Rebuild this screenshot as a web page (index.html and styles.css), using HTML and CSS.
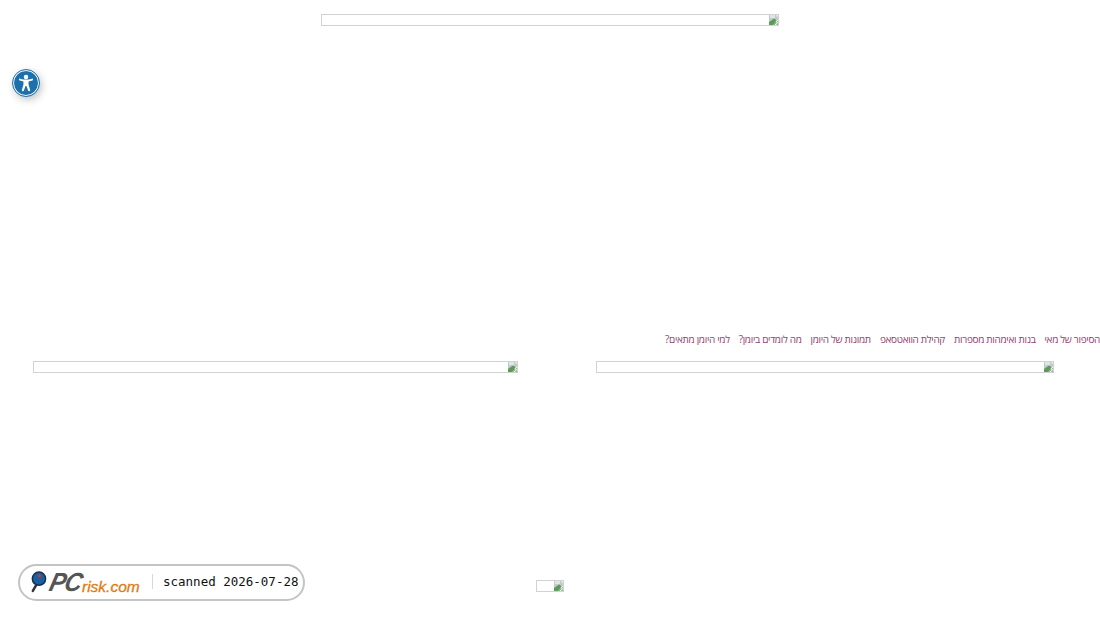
FILE: index.html
```html
<!DOCTYPE html>
<html lang="he" dir="rtl">
<head>
<meta charset="utf-8">
<title>הסיפור של מאי</title>
<link rel="stylesheet" href="styles.css">
</head>
<body>
<svg class="defs" width="0" height="0" aria-hidden="true">
  <symbol id="broken" viewBox="0 0 10 11">
    <path d="M0 0H7.5L10 2.5V11H0Z" fill="#c3cbc9"/>
    <path d="M1 1H6V4H1Z" fill="#dfe6ea"/>
    <path d="M0 11V8L5 4.5L8 6.5L4 11Z" fill="#5d9a58"/>
    <path d="M4 11L8 6.5L10 8V11Z" fill="#8cb58a"/>
    <path d="M7.5 0L10 2.5H7.5Z" fill="#f2f4f2"/>
    <path d="M10 5.5L7 7.5L8.5 9L6 11" fill="none" stroke="#fff" stroke-width="1"/>
  </symbol>
</svg>

<header class="top">
  <div class="ph ph-top"><svg class="ph-icon"><use href="#broken"/></svg></div>
</header>

<nav class="menu">
  <a href="#">הסיפור של מאי</a>
  <a href="#">בנות ואימהות מספרות</a>
  <a href="#">קהילת הוואטסאפ</a>
  <a href="#">תמונות של היומן</a>
  <a href="#">מה לומדים ביומן?</a>
  <a href="#">למי היומן מתאים?</a>
</nav>

<section class="cols">
  <div class="ph ph-right"><svg class="ph-icon"><use href="#broken"/></svg></div>
  <div class="ph ph-left"><svg class="ph-icon"><use href="#broken"/></svg></div>
</section>

<footer class="bottom">
  <div class="ph ph-small"><svg class="ph-icon"><use href="#broken"/></svg></div>
</footer>

<button class="a11y" type="button" aria-label="נגישות">
  <svg viewBox="0 0 24 24" width="18" height="18">
    <circle cx="12" cy="4" r="3" fill="#fff"/>
    <path d="M2.6 7.2C2.6 6.4 3.3 6 4 6.2C9.3 7.7 14.7 7.7 20 6.2C20.7 6 21.4 6.4 21.4 7.2C21.4 7.9 21 8.3 20.4 8.5L15.4 10V14L17.4 21C17.7 22 17.2 22.8 16.3 23C15.6 23.1 15.1 22.7 14.8 22L12.6 16H11.4L9.2 22C8.9 22.7 8.4 23.1 7.7 23C6.8 22.8 6.3 22 6.6 21L8.6 14V10L3.6 8.5C3 8.3 2.6 7.9 2.6 7.2Z" fill="#fff"/>
  </svg>
</button>

<aside class="stamp" dir="ltr">
  <span class="logo">
    <svg class="lens" viewBox="0 0 18 24" width="17" height="23">
      <path d="M7 15L3 22" stroke="#333" stroke-width="2.6" stroke-linecap="round"/>
      <circle cx="9.5" cy="9" r="7" fill="#1c5f9e" stroke="#15304f" stroke-width="1.6"/>
      <circle cx="10" cy="6" r="1.8" fill="#b3403f"/>
    </svg>
    <span class="logo-pc">PC</span><span class="logo-risk">risk.com</span>
  </span>
  <span class="stamp-sep"></span>
  <span class="stamp-text">scanned 2026-07-28</span>
</aside>
</body>
</html>
```
FILE: styles.css
```css
* { box-sizing: border-box; }
html, body { margin: 0; padding: 0; }
body {
  width: 1100px;
  height: 619px;
  overflow: hidden;
  background: #fff;
  font-family: "Open Sans", "Liberation Sans", sans-serif;
}
.defs { display: block; height: 0; }

.ph {
  height: 12px;
  border: 1px solid #d2d2d2;
  display: flex;
  justify-content: flex-start;
  background: #fff;
  overflow: hidden;
}
.ph-icon {
  width: 10px;
  height: 11px;
  flex: none;
  margin: -1px -1px 0 0;
}
.ph-top, .ph-right { width: 458px; }
.ph-left { width: 485px; }
.ph-small { width: 28px; }

.top {
  display: flex;
  justify-content: center;
  padding-top: 14px;
}

.menu {
  display: flex;
  gap: 9px;
  margin-top: 305px;
  height: 16px;
  align-items: center;
}
.menu a {
  font-size: 10px;
  letter-spacing: -.33px;
  line-height: 16px;
  color: #93416f;
  text-decoration: none;
  white-space: nowrap;
}

.cols {
  display: flex;
  gap: 78px;
  padding: 0 46px 0 33px;
  margin-top: 14px;
}

.bottom {
  display: flex;
  justify-content: center;
  margin-top: 207px;
}

.a11y {
  position: absolute;
  left: 13px;
  top: 70px;
  width: 26px;
  height: 26px;
  padding: 0;
  border-radius: 50%;
  border: 1.5px solid #fff;
  outline: 1px solid #1c71ad;
  background: #1c71ad;
  box-shadow: 2px 3px 8px rgba(0, 0, 0, .28);
  display: flex;
  align-items: center;
  justify-content: center;
}

.stamp {
  position: absolute;
  left: 18px;
  top: 564px;
  width: 287px;
  height: 37px;
  border: 2px solid #c4c4c4;
  border-radius: 19px;
  background: #fff;
  display: flex;
  align-items: center;
  padding: 0 0 2px 10px;
}
.logo {
  display: flex;
  align-items: flex-end;
  width: 113px;
  height: 26px;
  font-family: "Liberation Sans", sans-serif;
  font-style: italic;
  white-space: nowrap;
}
.lens { flex: none; margin-bottom: 2px; }
.logo-pc {
  display: inline-block;
  font-size: 26px;
  line-height: 26px;
  font-weight: 700;
  color: #555;
  transform: skewX(-14deg) scaleX(.92);
  transform-origin: left bottom;
  width: 35px;
  letter-spacing: -1px;
}
.logo-risk {
  font-size: 15.5px;
  line-height: 17px;
  font-weight: 400;
  -webkit-text-stroke: 0.3px #e07a10;
  color: #e07a10;
}
.stamp-sep {
  width: 1px;
  height: 15px;
  background: #d8d8d8;
  margin: 0 10px 0 9px;
}
.stamp-text {
  font-family: "DejaVu Sans Mono", monospace;
  font-size: 12.5px;
  color: #111;
  white-space: nowrap;
}
```
